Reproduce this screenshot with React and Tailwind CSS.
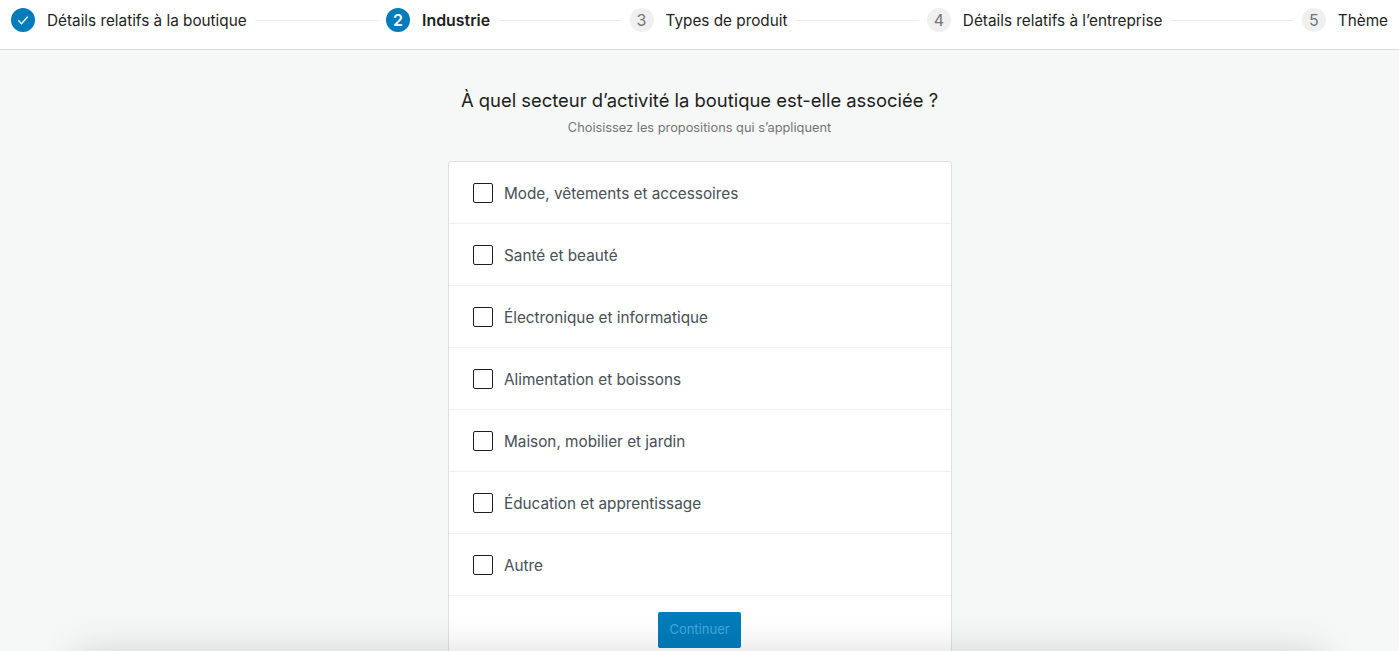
import React from "react";

const steps = [
  { label: "Détails relatifs à la boutique", state: "done" },
  { label: "Industrie", state: "current", n: 2 },
  { label: "Types de produit", n: 3 },
  { label: "Détails relatifs à l’entreprise", n: 4 },
  { label: "Thème", n: 5 },
];

const options = [
  "Mode, vêtements et accessoires",
  "Santé et beauté",
  "Électronique et informatique",
  "Alimentation et boissons",
  "Maison, mobilier et jardin",
  "Éducation et apprentissage",
  "Autre",
];

function Step({ step }) {
  return (
    <div className="flex items-center gap-3 shrink-0">
      {step.state === "done" ? (
        <span className="w-6 h-6 rounded-full bg-[#007cba] flex items-center justify-center">
          <svg width="16" height="16" viewBox="0 0 24 24" fill="none" stroke="#fff" strokeWidth="2">
            <path d="M5 12.5l4.8 5L19 7" />
          </svg>
        </span>
      ) : step.state === "current" ? (
        <span className="w-6 h-6 rounded-full bg-[#007cba] text-white text-[16px] font-semibold flex items-center justify-center">
          {step.n}
        </span>
      ) : (
        <span className="w-6 h-6 rounded-full bg-[#f0f0f0] text-[#757575] text-[16px] flex items-center justify-center">
          {step.n}
        </span>
      )}
      <span className={`leading-6 pt-px text-[#1e1e1e] whitespace-nowrap ${step.state === "current" ? "font-semibold text-[15.9px]" : "text-[15.3px]"}`}>
        {step.label}
      </span>
    </div>
  );
}

export default function App() {
  return (
    <div className="relative h-[651px] overflow-hidden bg-[#f6f7f7] font-['Inter','Liberation_Sans',sans-serif]">
      <header className="h-[50px] bg-white border-b border-[#dcdcde] flex items-center pl-[11px] pr-[11px] pb-[9px]">
        {steps.map((s, i) => (
          <React.Fragment key={s.label}>
            <Step step={s} />
            {i < steps.length - 1 && <div className="flex-1 h-px bg-[#ececec] mx-2" />}
          </React.Fragment>
        ))}
      </header>
      <main className="flex flex-col items-center">
        <h1 className="mt-[38px] text-[18.4px] leading-6 text-[#1e1e1e] font-normal">
          À quel secteur d’activité la boutique est-elle associée ?
        </h1>
        <p className="mt-[6px] text-[12.8px] leading-[20px] text-[#757575]">
          Choisissez les propositions qui s’appliquent
        </p>
        <div className="mt-[23px] w-[504px] bg-white border border-[#e0e0e0] rounded-[3px]">
          {options.map((o) => (
            <label key={o} className="h-[62px] flex items-center gap-[11.5px] pl-6 border-b border-[#f0f0f0]">
              <span className="w-5 h-5 bg-white border border-[#1e1e1e] rounded-[2px]" />
              <span className="text-[15.3px] leading-5 pt-[3px] text-[#474f57]">{o}</span>
            </label>
          ))}
          <div className="flex justify-center pt-4 pb-6">
            <button className="w-[83px] h-9 bg-[#007cba] rounded-[2px] text-[13px] text-[#44a8dc]">
              Continuer
            </button>
          </div>
        </div>
      </main>
      <div className="absolute left-[90px] right-[90px] top-[664px] h-10 shadow-[0_0_38px_14px_rgba(0,0,0,0.14)]" />
    </div>
  );
}
